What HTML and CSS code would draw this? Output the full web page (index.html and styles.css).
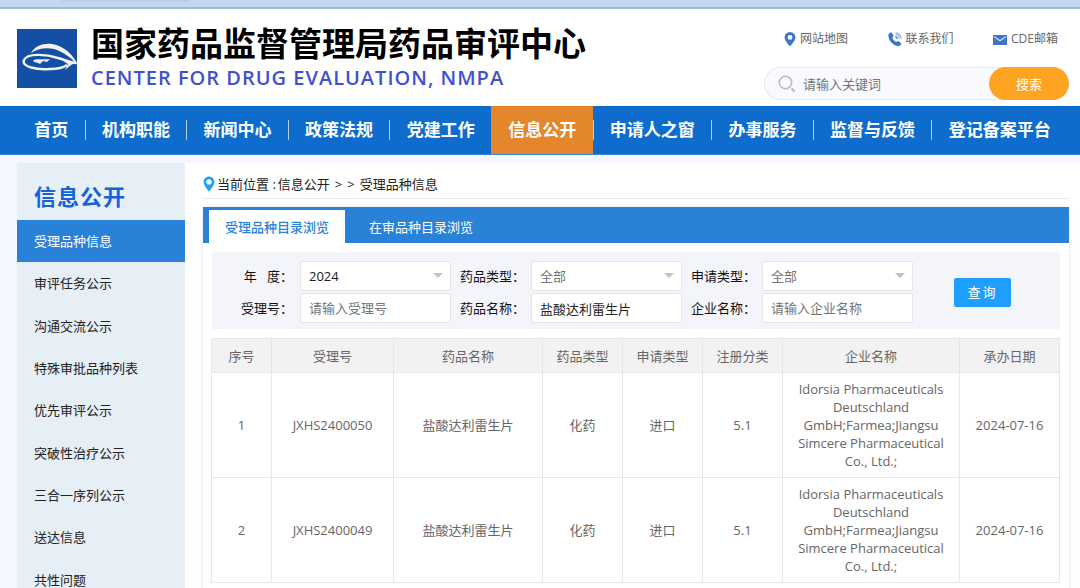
FILE: index.html
```html
<!DOCTYPE html>
<html lang="zh-CN">
<head>
<meta charset="utf-8">
<title>国家药品监督管理局药品审评中心</title>
<link rel="stylesheet" href="styles.css">
</head>
<body>
<div class="browser-strip"><span class="browser-tab"></span></div>

<header class="header">
  <svg class="logo" viewBox="0 0 62 59" aria-hidden="true">
    <rect width="60" height="59" fill="#134fa4"/>
    <path d="M14 24C18 17 26 14 35 15C47 17 57 26 62 38C56 30 47 23 37 20C28 18 20 20 14 24Z" fill="#f4f3f0"/>
    <path d="M59 34C52 33 48 31 41 29C29 25 10 24 7 31C4 38 20 41 33 40C39 40 46 39 50 36" fill="none" stroke="#f4f3f0" stroke-width="2.400"/>
    <path d="M46 32L51 35L48 41L54 36L60 33Z" fill="#f4f3f0"/>
    <path d="M16 32C18 29 25 31 33 30L30 33L26 32L23 35C20 33 18 34 16 32Z" fill="#e9edf2"/>
  </svg>
  <div class="brand">
    <h1 class="brand-name">国家药品监督管理局药品审评中心</h1>
    <p class="brand-en">CENTER FOR DRUG EVALUATION, NMPA</p>
  </div>
  <div class="tools">
    <div class="quick-links">
      <a href="#"><svg width="12" height="16" viewBox="0 0 12 16" aria-hidden="true"><path fill="#3d76c9" fill-rule="evenodd" d="M6 1a5.400 5.400 0 0 0-5.400 5.400C.6 10 6 15.200 6 15.200S11.400 10 11.400 6.400A5.400 5.400 0 0 0 6 1Zm0 3a2.400 2.400 0 1 1 0 4.800A2.400 2.400 0 0 1 6 4Z"/></svg>网站地图</a>
      <a href="#"><svg width="14" height="16" viewBox="0 0 14 16" aria-hidden="true"><path fill="#3d76c9" d="M3.200 1.200 5.800 4.800 4.300 6.600C5.200 8.800 6.300 10 8.300 11.100L10 9.800 13.400 12.600C12.800 14.200 11.500 15.200 10.100 15.200 4.500 14.300 0 8.400.4 4 .6 2.600 2 1.400 3.200 1.200Z"/><path fill="none" stroke="#3d76c9" stroke-width="1.200" d="M7.300 5.600c1 .3 1.700 1.200 2 2.300"/><path fill="none" stroke="#8db0e2" stroke-width="1.200" d="M7.400 3.700c2 .3 3.500 2 3.900 4M7.500 1.900c3 .2 5.200 2.700 5.600 5.600"/></svg>联系我们</a>
      <a href="#"><svg width="14" height="16" viewBox="0 0 14 16" aria-hidden="true"><path fill="#3d76c9" d="M0 4h14v10H0z"/><path fill="none" stroke="#d5e2f5" stroke-width="1.200" d="m1 5.500 6 4.300 6-4.300"/></svg>CDE邮箱</a>
    </div>
    <form class="site-search">
      <svg width="18" height="18" viewBox="0 0 18 18" aria-hidden="true"><circle cx="7.500" cy="7.500" r="6.200" fill="none" stroke="#bcbcbc" stroke-width="1.600"/><path d="m13.500 13.500 3 3" stroke="#bcbcbc" stroke-width="2.200"/></svg>
      <input type="text" placeholder="请输入关键词" aria-label="请输入关键词">
      <button type="button">搜索</button>
    </form>
  </div>
</header>

<nav class="nav">
  <a href="#"><span>首页</span></a>
  <a href="#"><span>机构职能</span></a>
  <a href="#"><span>新闻中心</span></a>
  <a href="#"><span>政策法规</span></a>
  <a href="#"><span>党建工作</span></a>
  <a href="#" class="active"><span>信息公开</span></a>
  <a href="#"><span>申请人之窗</span></a>
  <a href="#"><span>办事服务</span></a>
  <a href="#"><span>监督与反馈</span></a>
  <a href="#"><span>登记备案平台</span></a>
</nav>

<div class="page">
  <aside class="sidebar">
    <h2>信息公开</h2>
    <ul>
      <li><a href="#" class="active">受理品种信息</a></li>
      <li><a href="#">审评任务公示</a></li>
      <li><a href="#">沟通交流公示</a></li>
      <li><a href="#">特殊审批品种列表</a></li>
      <li><a href="#">优先审评公示</a></li>
      <li><a href="#">突破性治疗公示</a></li>
      <li><a href="#">三合一序列公示</a></li>
      <li><a href="#">送达信息</a></li>
      <li><a href="#">共性问题</a></li>
    </ul>
  </aside>

  <main class="main">
    <div class="crumbs">
      <svg width="12" height="16" viewBox="0 0 12 16" aria-hidden="true"><path fill="#1e9fff" fill-rule="evenodd" d="M6 .5A5.400 5.400 0 0 0 .6 5.900C.6 9.500 6 15.500 6 15.500S11.400 9.500 11.400 5.900A5.400 5.400 0 0 0 6 .5Zm0 2.700a2.700 2.700 0 1 1 0 5.400 2.700 2.700 0 0 1 0-5.400Z"/></svg>
      <span>当前位置 :</span><a href="#">信息公开</a><span class="sep">&gt;</span><span class="sep">&gt;</span><span class="here">受理品种信息</span>
    </div>

    <section class="panel">
      <div class="tabs">
        <button type="button" class="active">受理品种目录浏览</button>
        <button type="button">在审品种目录浏览</button>
      </div>

      <form class="filters">
        <div class="fields">
          <label for="year">年 &nbsp; 度：</label>
          <div class="select"><select id="year"><option>2024</option></select></div>
          <label for="drug-type">药品类型：</label>
          <div class="select muted"><select id="drug-type"><option>全部</option></select></div>
          <label for="apply-type">申请类型：</label>
          <div class="select muted"><select id="apply-type"><option>全部</option></select></div>
          <label for="accept-no">受理号：</label>
          <input id="accept-no" type="text" placeholder="请输入受理号">
          <label for="drug-name">药品名称：</label>
          <input id="drug-name" type="text" value="盐酸达利雷生片">
          <label for="company">企业名称：</label>
          <input id="company" type="text" placeholder="请输入企业名称">
        </div>
        <button type="button" class="query">查询</button>
      </form>

      <table class="results">
        <colgroup><col class="c-no"><col class="c-id"><col class="c-name"><col class="c-type"><col class="c-type"><col class="c-type"><col class="c-company"><col class="c-date"></colgroup>
        <thead>
          <tr><th>序号</th><th>受理号</th><th>药品名称</th><th>药品类型</th><th>申请类型</th><th>注册分类</th><th>企业名称</th><th>承办日期</th></tr>
        </thead>
        <tbody>
          <tr><td>1</td><td>JXHS2400050</td><td>盐酸达利雷生片</td><td>化药</td><td>进口</td><td>5.1</td><td>Idorsia Pharmaceuticals Deutschland GmbH;Farmea;Jiangsu Simcere Pharmaceutical Co., Ltd.;</td><td>2024-07-16</td></tr>
          <tr><td>2</td><td>JXHS2400049</td><td>盐酸达利雷生片</td><td>化药</td><td>进口</td><td>5.1</td><td>Idorsia Pharmaceuticals Deutschland GmbH;Farmea;Jiangsu Simcere Pharmaceutical Co., Ltd.;</td><td>2024-07-16</td></tr>
        </tbody>
      </table>
    </section>
  </main>
</div>
</body>
</html>
```
FILE: styles.css
```css
* {
  box-sizing: border-box;
}

body {
  margin: 0;
  background: #f3f7ff;
  color: #222;
  font: 13px/18px "Open Sans", "Noto Sans CJK SC", sans-serif;
}

a {
  color: inherit;
  text-decoration: none;
}

button,
input,
select {
  font: inherit;
  color: inherit;
}

h1, h2, p, ul {
  margin: 0;
  padding: 0;
}

ul {
  list-style: none;
}

.browser-strip {
  height: 9px;
  padding-left: 62px;
  background: #c2d7f3;
  border-bottom: 2px solid #a1b6d2;
}

.browser-tab {
  display: block;
  width: 127px;
  height: 2px;
  background: #b8cde9;
}

/* Header */
.header {
  display: flex;
  align-items: flex-start;
  height: 97px;
  padding: 17px 11px 0 17px;
  background: #fff;
}

.logo {
  width: 62px;
  height: 59px;
  margin-top: 3px;
}

.brand {
  margin-left: 12px;
}

.brand-name {
  color: #000;
  font-size: 33px;
  line-height: 36px;
  font-weight: 700;
  white-space: nowrap;
}

.brand-en {
  margin-top: 4px;
  color: #3f51d0;
  font-size: 20px;
  line-height: 24px;
  font-weight: 600;
  letter-spacing: 1px;
  white-space: nowrap;
}

.tools {
  width: 305px;
  margin-left: auto;
}

.quick-links {
  display: flex;
  justify-content: space-between;
  padding: 4px 11px 0 20px;
  color: #666;
  font-size: 12px;
}

.quick-links a {
  display: flex;
  align-items: center;
  gap: 4px;
}

.site-search {
  display: flex;
  align-items: center;
  height: 33px;
  margin-top: 19px;
  padding-left: 13px;
  background: #f9faff;
  border: 1px solid #e8e8ea;
  border-right: 0;
  border-radius: 17px;
}

.site-search input {
  flex: 1;
  min-width: 0;
  margin-left: 7px;
  padding: 0;
  border: 0;
  background: none;
}

.site-search input::placeholder {
  color: #757575;
}

.site-search button {
  width: 80px;
  height: 33px;
  padding: 0;
  border: 0;
  border-radius: 17px;
  background: #ffa422;
  color: #fff;
}

/* Main navigation */
.nav {
  display: flex;
  height: 49px;
  padding: 0 13px 0 17px;
  background: #0e6dcc;
  border-bottom: 1px solid #3186d8;
  color: #fff;
  font-size: 17px;
  font-weight: 700;
}

.nav a {
  flex: 1 1 auto;
  display: flex;
  align-items: center;
}

.nav span {
  flex: 1;
  line-height: 20px;
  text-align: center;
  white-space: nowrap;
  border-left: 1px solid #b4d0ee;
}

.nav a:first-child span,
.nav .active span {
  border-left-color: transparent;
}

.nav .active {
  background: #e4862b;
}

/* Page body */
.page {
  display: flex;
  padding: 8px 0 0 17px;
}

.sidebar {
  display: flex;
  flex-direction: column;
  flex: 0 0 168px;
  background: #e6eef6;
}

.sidebar h2 {
  padding: 17px 17px 8px;
  color: #1762d6;
  font-size: 22px;
  line-height: 32px;
  font-weight: 700;
  letter-spacing: 1px;
}

.sidebar ul {
  flex: 1;
  display: grid;
  grid-auto-rows: 1fr;
}

.sidebar li {
  display: flex;
}

.sidebar a {
  flex: 1;
  display: flex;
  align-items: center;
  padding: 0 17px;
}

.sidebar .active {
  background: #2a82d8;
  color: #fff;
}

.main {
  flex: 1;
  min-width: 0;
  padding: 0 11px 0 18px;
  background: #fff;
}

.crumbs {
  display: flex;
  align-items: center;
  height: 36px;
  padding-top: 6px;
  border-bottom: 1px solid #e6e6e6;
}

.crumbs svg {
  margin-right: 2px;
}

.crumbs a {
  margin-left: 2px;
}

.crumbs .sep,
.crumbs .here {
  margin-left: 5px;
}

.panel {
  margin-top: 8px;
  padding-bottom: 18px;
  box-shadow: 0 0 4px #dbe6f4;
}

.tabs {
  display: flex;
  height: 36px;
  padding: 3px 0 0 6px;
  background: #2a82d8;
}

.tabs button {
  padding: 0 16px;
  border: 0;
  background: none;
  color: #fff;
}

.tabs .active {
  margin-right: 8px;
  background: #fff;
  color: #2a82d8;
  font-weight: 500;
}

/* Filters */
.filters {
  display: flex;
  align-items: center;
  margin: 9px 9px 0;
  padding: 9px 0 6px 17px;
  background: #f4f5fa;
}

.fields {
  display: grid;
  grid-template-columns: 71px 151px 80px 151px 80px 151px;
  row-gap: 2px;
  align-items: center;
}

.fields label {
  padding-left: 9px;
  color: #111;
  white-space: nowrap;
}

.fields label:nth-child(6n + 1) {
  padding: 0 7px 0 0;
  text-align: right;
}

.fields input,
.fields select {
  display: block;
  width: 100%;
  height: 30px;
  padding: 0 8px;
  border: 1px solid #e6e6e6;
  border-radius: 2px;
  background: #fff;
  color: #222;
  appearance: none;
}

.fields input::placeholder,
.fields .muted select {
  color: #757575;
}

.select {
  position: relative;
}

.select::after {
  content: "";
  position: absolute;
  top: 12px;
  right: 8px;
  width: 10px;
  height: 5px;
  background: #c2c2c2;
  clip-path: polygon(0 0, 100% 0, 50% 100%);
  pointer-events: none;
}

.query {
  width: 57px;
  height: 29px;
  margin-left: 41px;
  padding: 0;
  border: 0;
  border-radius: 2px;
  background: #1e9fff;
  color: #fff;
  letter-spacing: 2px;
}

/* Results */
.results {
  width: calc(100% - 17px);
  margin: 9px 9px 0 8px;
  border-collapse: collapse;
  table-layout: fixed;
  color: #666;
  text-align: center;
}

.results th,
.results td {
  border: 1px solid #e6e6e6;
  font-weight: 400;
}

.results th {
  height: 34px;
  padding: 0;
  background: #f2f2f2;
}

.results td {
  padding: 7px 12px;
}

.c-no { width: 60px; }
.c-id { width: 122px; }
.c-name { width: 149px; }
.c-type { width: 80px; }
.c-date { width: 100px; }
```
